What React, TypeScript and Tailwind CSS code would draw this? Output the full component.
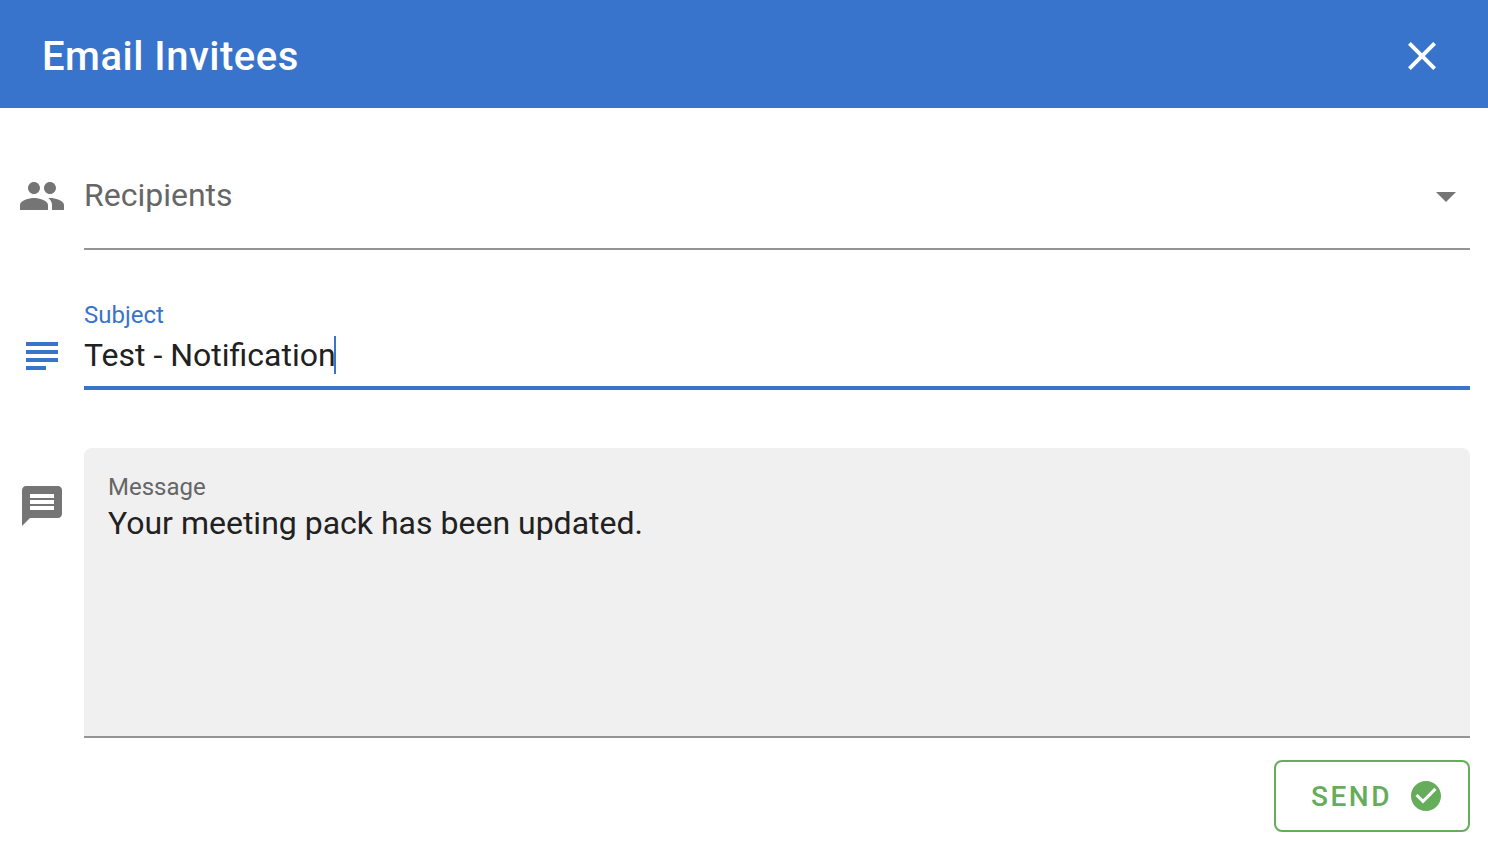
import { useState } from "react";

type IconProps = {
  path: string;
  className?: string;
};

const icons = {
  close:
    "M19 6.41L17.59 5 12 10.59 6.41 5 5 6.41 10.59 12 5 17.59 6.41 19 12 13.41 17.59 19 19 17.59 13.41 12z",
  people:
    "M16 11c1.66 0 2.99-1.34 2.99-3S17.66 5 16 5c-1.66 0-3 1.34-3 3s1.34 3 3 3zm-8 0c1.66 0 2.99-1.34 2.99-3S9.66 5 8 5C6.34 5 5 6.34 5 8s1.34 3 3 3zm0 2c-2.33 0-7 1.17-7 3.5V19h14v-2.5c0-2.33-4.67-3.5-7-3.5zm8 0c-.29 0-.62.02-.97.05 1.16.84 1.97 1.97 1.97 3.45V19h6v-2.5c0-2.33-4.67-3.5-7-3.5z",
  subject:
    "M14 17H4v2h10v-2zm6-8H4v2h16V9zM4 15h16v-2H4v2zM4 5v2h16V5H4z",
  message:
    "M20 2H4c-1.1 0-1.99.9-1.99 2L2 22l4-4h14c1.1 0 2-.9 2-2V4c0-1.1-.9-2-2-2zm-2 12H6v-2h12v2zm0-3H6V9h12v2zm0-3H6V6h12v2z",
  dropDown: "M7 10l5 5 5-5z",
  checkCircle:
    "M12 2C6.48 2 2 6.48 2 12s4.48 10 10 10 10-4.48 10-10S17.52 2 12 2zm-2 15l-5-5 1.41-1.41L10 14.17l7.59-7.59L19 8l-9 9z",
};

function Icon({ path, className = "" }: IconProps) {
  return (
    <svg
      viewBox="0 0 24 24"
      fill="currentColor"
      aria-hidden="true"
      className={`shrink-0 ${className}`}
    >
      <path d={path} />
    </svg>
  );
}

export default function App() {
  const [recipients, setRecipients] = useState("");
  const [subject, setSubject] = useState("Test - Notification");
  const [message, setMessage] = useState("Your meeting pack has been updated.");

  return (
    <div className="min-h-screen bg-white font-[Roboto,sans-serif] text-[32px] text-[#212121]">
      {/* Title bar */}
      <header className="flex h-[108px] items-center justify-between bg-[#3874cb] px-[42px] pt-1 text-white">
        <h1 className="pt-0.5 text-[40px] leading-12 font-medium tracking-[0.5px]">
          Email Invitees
        </h1>
        <button type="button" aria-label="Close">
          <Icon path={icons.close} className="size-12" />
        </button>
      </header>

      <form
        className="px-[18px] pt-9 pb-5"
        onSubmit={(e) => e.preventDefault()}
      >
        {/* Recipients */}
        <div className="flex items-start gap-[18px]">
          <Icon path={icons.people} className="mt-7 size-12 text-[#757575]" />
          <div className="relative flex-1">
            <select
              aria-label="Recipients"
              value={recipients}
              onChange={(e) => setRecipients(e.target.value)}
              className="block h-[106px] w-full appearance-none border-b-2 border-[#949494] bg-transparent pb-0.5 text-[#666666] outline-none"
            >
              <option value="">Recipients</option>
            </select>
            <Icon
              path={icons.dropDown}
              className="pointer-events-none absolute top-7 right-0 size-12 text-[#757575]"
            />
          </div>
        </div>

        {/* Subject */}
        <div className="mt-12 flex items-end gap-[18px]">
          <Icon path={icons.subject} className="mb-2.5 size-12 text-[#3874cb]" />
          <div className="flex-1 border-b-4 border-[#3874cb] pb-3">
            <label
              htmlFor="subject"
              className="block text-2xl leading-[34px] text-[#3874cb]"
            >
              Subject
            </label>
            <div className="mt-1 flex h-[38px]">
              <input
                id="subject"
                type="text"
                value={subject}
                onChange={(e) => setSubject(e.target.value)}
                className="field-sizing-content caret-transparent outline-none"
              />
              <span className="-ml-0.5 w-0.5 bg-[#3874cb]" />
            </div>
          </div>
        </div>

        {/* Message */}
        <div className="mt-[58px] flex items-start gap-[18px]">
          <Icon path={icons.message} className="mt-[34px] size-12 text-[#757575]" />
          <div className="flex-1 rounded-t-lg border-b-2 border-[#949494] bg-[#f0f0f0] px-6 pt-6">
            <label
              htmlFor="message"
              className="block text-2xl leading-[30px] text-[#666666]"
            >
              Message
            </label>
            <textarea
              id="message"
              value={message}
              onChange={(e) => setMessage(e.target.value)}
              className="block h-[234px] w-full resize-none leading-[42px] outline-none"
            />
          </div>
        </div>

        {/* Actions */}
        <div className="mt-[22px] flex justify-end">
          <button
            type="submit"
            className="flex h-[72px] items-center gap-4 rounded-lg border-2 border-[#66ad5b] pr-6 pl-[35px] text-[28px] font-medium tracking-[2.5px] text-[#66ad5b]"
          >
            <span className="pt-0.5">SEND</span>
            <Icon path={icons.checkCircle} className="size-9" />
          </button>
        </div>
      </form>
    </div>
  );
}
